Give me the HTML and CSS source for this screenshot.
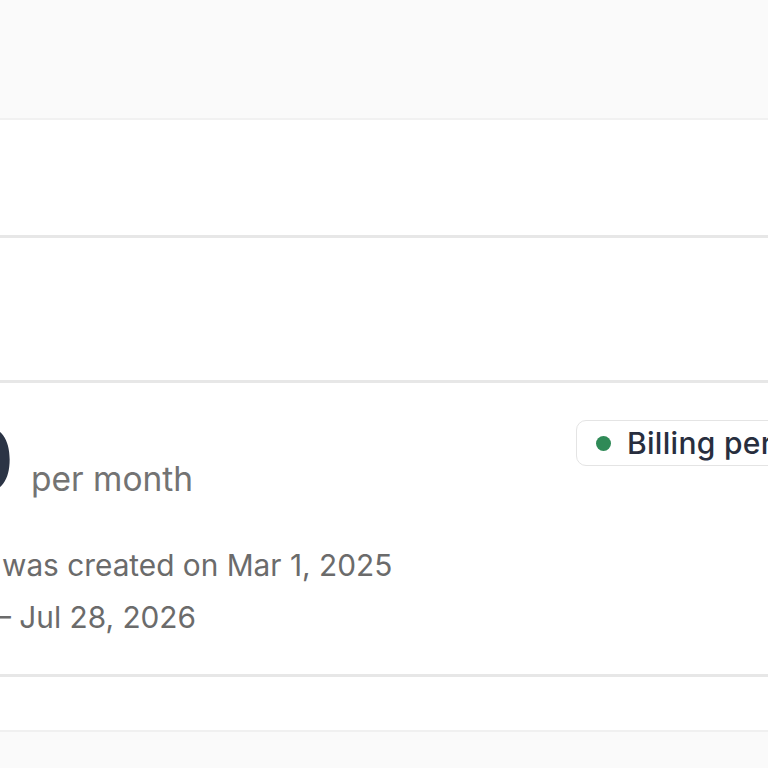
FILE: index.html
```html
<!DOCTYPE html>
<html lang="en">
<head>
<meta charset="utf-8">
<title>Billing</title>
<link rel="stylesheet" href="styles.css">
</head>
<body>
<div class="page">
  <div class="top-band"></div>
  <div class="list">
    <div class="row row-a"></div>
    <div class="row row-b"></div>
    <div class="row card">
      <div class="card-main">
        <div class="price-row">
          <div class="price-box"><span class="price">$20</span></div>
          <span class="per">per month</span>
        </div>
        <div class="details">
          <p class="line line-1">was created on Mar 1, 2025</p>
          <p class="line line-2">– Jul 28, 2026</p>
        </div>
      </div>
      <div class="badge">
        <span class="dot"></span>
        <span class="badge-text">Billing period active</span>
      </div>
    </div>
    <div class="row row-d"></div>
  </div>
  <div class="bottom-band"></div>
</div>
</body>
</html>
```

FILE: styles.css
```css
html, body {
  margin: 0;
  padding: 0;
  background: #fafafa;
}
body {
  width: 768px;
  height: 768px;
  overflow: hidden;
  font-family: Inter, "Noto Sans", "Liberation Sans", sans-serif;
}
.page {
  display: flex;
  flex-direction: column;
  width: 768px;
}
.top-band {
  height: 118px;
  background: #fafafa;
  border-bottom: 2px solid #f1f1f1;
}
.list {
  display: flex;
  flex-direction: column;
  background: #ffffff;
}
.row {
  background: #ffffff;
  border-bottom: 3px solid #e7e7e7;
}
.row-a { height: 115px; }
.row-b { height: 142px; }
.row-d {
  height: 53px;
  border-bottom: 2px solid #f0f0f0;
}
.card {
  height: 291px;
  display: flex;
  align-items: flex-start;
  overflow: hidden;
}
.card-main {
  flex: 0 0 576px;
  display: flex;
  flex-direction: column;
  padding-top: 35px;
}
.price-row {
  display: flex;
  align-items: baseline;
  gap: 18px;
}
.price-box {
  width: 13px;
  display: flex;
  justify-content: flex-end;
}
.price {
  font-size: 86px;
  line-height: 84px;
  font-weight: 600;
  color: #2b3445;
  white-space: nowrap;
  letter-spacing: -1px;
}
.per {
  font-size: 33.5px;
  color: #737373;
  white-space: nowrap;
}
.details {
  margin-top: 37px;
}
.line {
  margin: 0;
  font-size: 29.8px;
  line-height: 52px;
  color: #6b6b6b;
  white-space: nowrap;
}
.line-1 { padding-left: 2px; }
.line-2 { margin-left: -4px; }
.badge {
  flex-shrink: 0;
  margin-top: 37px;
  height: 44px;
  display: flex;
  align-items: center;
  gap: 16px;
  padding: 0 18px 0 19px;
  border: 1px solid #e4e4e4;
  border-radius: 10px;
  background: #ffffff;
  white-space: nowrap;
}
.dot {
  width: 15px;
  height: 15px;
  border-radius: 50%;
  background: #2f8a57;
}
.badge-text {
  font-size: 30px;
  font-weight: 500;
  letter-spacing: 0.3px;
  color: #282e3e;
}
```
